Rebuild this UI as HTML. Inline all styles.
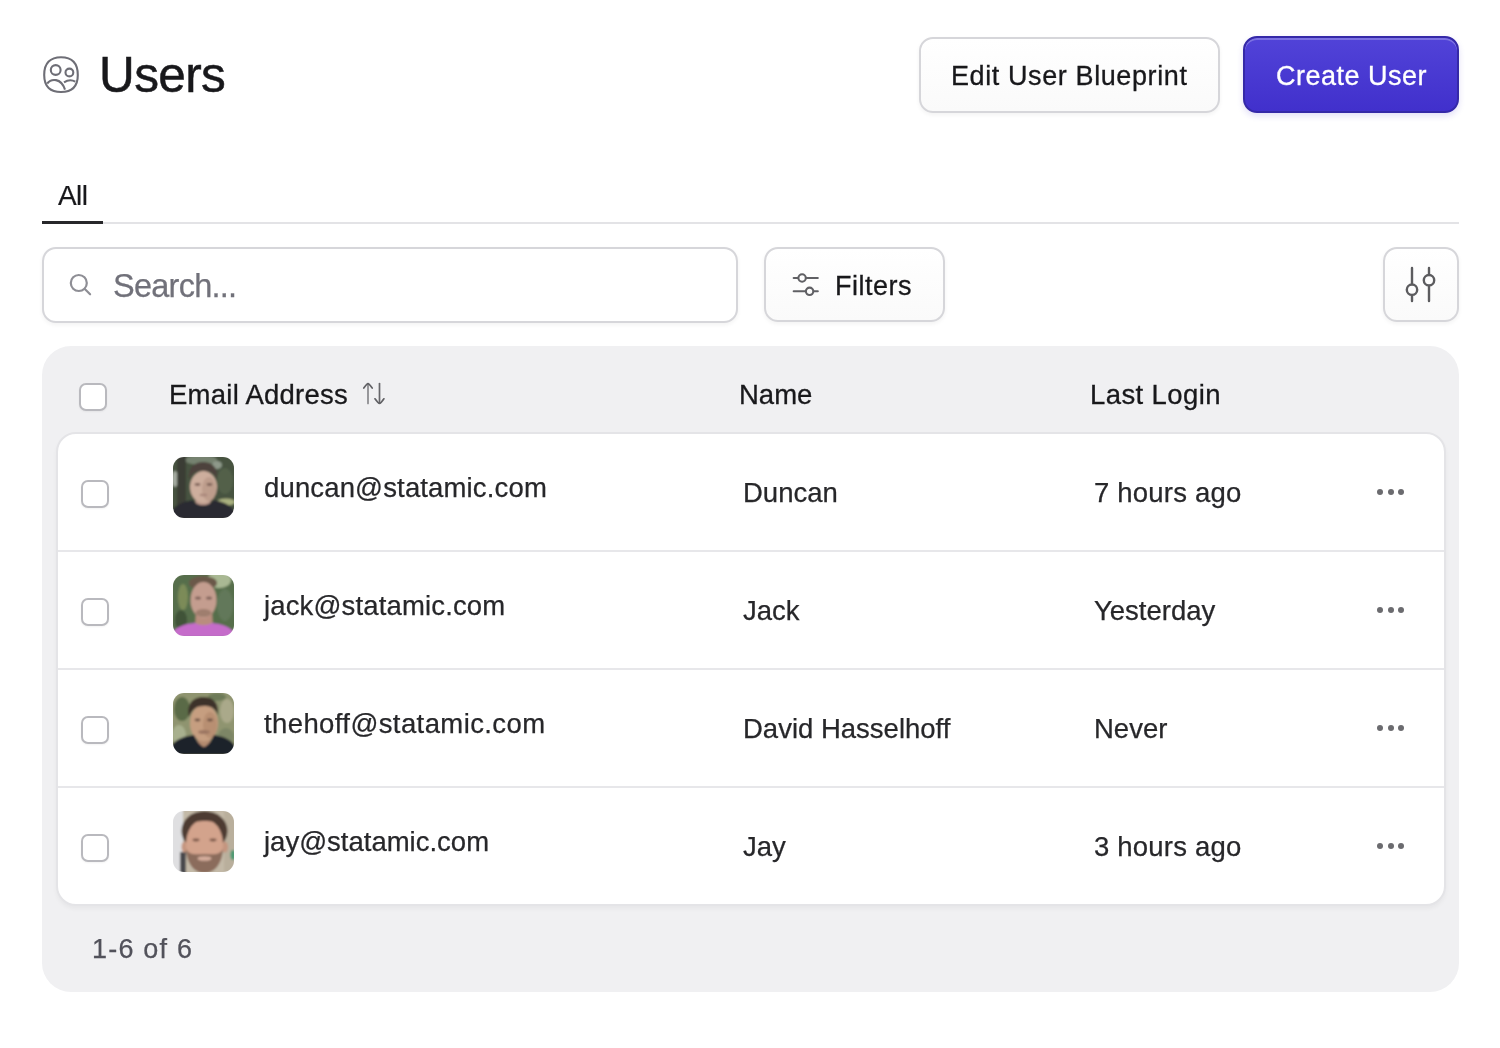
<!DOCTYPE html>
<html>
<head>
<meta charset="utf-8">
<style>
html,body{margin:0;padding:0;background:#fff;}
body{width:1500px;height:1048px;position:relative;overflow:hidden;font-family:"Liberation Sans",sans-serif;color:#18181b;}
.a{position:absolute;}
.t{position:absolute;white-space:nowrap;line-height:1;will-change:transform;-webkit-text-stroke:0.25px currentColor;}
.btn{position:absolute;box-sizing:border-box;border:2px solid #d6d6da;border-radius:14px;background:linear-gradient(#fff,#fafafa);box-shadow:0 2px 4px rgba(0,0,0,0.05);}
.cb{position:absolute;box-sizing:border-box;width:28px;height:28px;border:2px solid #b9b9be;border-radius:7px;background:#fff;box-shadow:0 1px 2px rgba(0,0,0,0.05);}
.sep{position:absolute;left:58px;width:1386px;height:2px;background:#e7e7ea;}
.dots{position:absolute;width:6px;height:6px;border-radius:50%;background:#6b6b6f;}
.av{position:absolute;left:173px;width:61px;height:61px;border-radius:11px;overflow:hidden;}
</style>
</head>
<body>
<!-- header icon -->
<svg class="a" style="left:40px;top:54px" width="42" height="42" viewBox="0 0 42 42" fill="none" stroke="#6e6e76" stroke-width="2.1">
  <path d="M21 3.2 C31.5 3.2 37.8 9 37.8 21 C37.8 33 31.5 38 21 38 C10.5 38 4.2 33 4.2 21 C4.2 9 10.5 3.2 21 3.2 Z"/>
  <circle cx="15.7" cy="16" r="4.9"/>
  <circle cx="29.4" cy="18.5" r="3.9"/>
  <path d="M7.2 29.5 C11 24.5 21 23.5 25 35.6"/>
  <path d="M24 28.3 C28 25.8 32.5 26 35.3 27.7"/>
</svg>
<div class="t" id="title" style="left:99px;top:50px;font-size:49.5px;color:#18181b;letter-spacing:-0.6px;-webkit-text-stroke:0.5px #18181b;">Users</div>

<!-- top buttons -->
<div class="btn" style="left:919px;top:37px;width:301px;height:76px;"></div>
<div class="t" id="editbp" style="left:951px;top:63px;font-size:27px;color:#18181b;letter-spacing:0.6px;-webkit-text-stroke:0.3px #18181b;">Edit User Blueprint</div>
<div class="a" style="left:1243px;top:36px;width:216px;height:77px;box-sizing:border-box;border-radius:14px;border:2px solid #3529a8;background:linear-gradient(#5143d8,#4130cc);box-shadow:inset 0 2px 0 rgba(255,255,255,0.25),0 3px 6px rgba(60,40,200,0.15);"></div>
<div class="t" id="create" style="left:1276px;top:63px;font-size:27px;color:#fff;letter-spacing:0.5px;-webkit-text-stroke:0.3px #fff;">Create User</div>

<!-- tabs -->
<div class="t" id="all" style="left:58px;top:181.5px;font-size:28px;color:#18181b;-webkit-text-stroke:0.2px #18181b;letter-spacing:-0.6px;">All</div>
<div class="a" style="left:42px;top:222px;width:1417px;height:1.5px;background:#e3e3e6;"></div>
<div class="a" style="left:42px;top:221.3px;width:61px;height:2.5px;background:#27272a;"></div>

<!-- search -->
<div class="btn" style="left:42px;top:247px;width:696px;height:76px;background:#fff;"></div>
<svg class="a" style="left:66px;top:270px" width="30" height="30" viewBox="0 0 30 30" fill="none" stroke="#8e8e95" stroke-width="2.2" stroke-linecap="round">
  <circle cx="12.8" cy="13" r="8"/>
  <path d="M18.8 19 L24.1 24.3"/>
</svg>
<div class="t" id="search" style="left:113px;top:269.5px;font-size:32.5px;color:#71717a;letter-spacing:-0.75px;">Search...</div>

<!-- filters -->
<div class="btn" style="left:764px;top:247px;width:181px;height:75px;"></div>
<svg class="a" style="left:788px;top:270px" width="36" height="28" viewBox="0 0 36 28" fill="none" stroke="#606064" stroke-width="2.1" stroke-linecap="round">
  <path d="M5.7 8 H10 M18.3 8 H29.8"/>
  <circle cx="14.1" cy="8" r="3.7"/>
  <path d="M5.7 21.3 H17.5 M25.8 21.3 H29.8"/>
  <circle cx="21.6" cy="21.3" r="3.7"/>
</svg>
<div class="t" id="filters" style="left:834.5px;top:273px;font-size:27px;color:#18181b;letter-spacing:0.5px;-webkit-text-stroke:0.3px #18181b;">Filters</div>

<!-- column settings -->
<div class="btn" style="left:1383px;top:247px;width:76px;height:75px;"></div>
<svg class="a" style="left:1396px;top:260px" width="50" height="50" viewBox="0 0 50 50" fill="none" stroke="#5c5c5f" stroke-width="2.4" stroke-linecap="round">
  <path d="M16 8 V24 M16 35.5 V41"/>
  <circle cx="16" cy="29.7" r="5.2"/>
  <path d="M33 8 V14.5 M33 26 V41"/>
  <circle cx="33" cy="20.2" r="5.2"/>
</svg>

<!-- table container -->
<div class="a" style="left:42px;top:346px;width:1417px;height:646px;border-radius:29px;background:#f0f0f2;"></div>
<div class="cb" style="left:79px;top:383px;"></div>
<div class="t" id="h-email" style="left:169px;top:381px;font-size:27.5px;color:#18181b;letter-spacing:0.25px;-webkit-text-stroke:0.3px #18181b;">Email Address</div>
<svg class="a" style="left:358px;top:378px" width="32" height="32" viewBox="0 0 32 32" fill="none" stroke-width="1.7" stroke-linecap="round" stroke-linejoin="round">
  <path d="M10 25.5 V6" stroke="#88888c"/>
  <path d="M5.8 10 C7.5 7.6 9 5.6 10 5.6 C11 5.6 12.5 7.6 14.2 10" stroke="#606064"/>
  <path d="M21.5 5.5 V25" stroke="#66666a"/>
  <path d="M17 20.8 C18.7 23.2 20.5 25.4 21.5 25.4 C22.5 25.4 24.3 23.2 25.9 20.8" stroke="#606064"/>
</svg>
<div class="t" id="h-name" style="left:739px;top:381px;font-size:27.5px;color:#18181b;-webkit-text-stroke:0.3px #18181b;">Name</div>
<div class="t" id="h-login" style="left:1090px;top:381px;font-size:27.5px;color:#18181b;letter-spacing:0.4px;-webkit-text-stroke:0.3px #18181b;">Last Login</div>

<!-- inner card -->
<div class="a" style="left:56px;top:432px;width:1390px;height:474px;box-sizing:border-box;border:2px solid #e4e4e7;border-radius:20px;background:#fff;box-shadow:0 3px 4px rgba(0,0,0,0.04);"></div>
<div class="sep" style="top:550px;"></div>
<div class="sep" style="top:668px;"></div>
<div class="sep" style="top:786px;"></div>

<!-- rows -->
<div class="cb" style="left:81px;top:480px;"></div>
<div class="cb" style="left:81px;top:598px;"></div>
<div class="cb" style="left:81px;top:716px;"></div>
<div class="cb" style="left:81px;top:834px;"></div>

<div class="av" style="top:457px;"><svg width="61" height="61" viewBox="0 0 61 61"><defs><filter id="b1" x="-20%" y="-20%" width="140%" height="140%"><feGaussianBlur stdDeviation="1.2"/></filter></defs>
<g filter="url(#b1)">
<rect x="-5" y="-5" width="71" height="71" fill="#46523f"/>
<ellipse cx="28" cy="3" rx="16" ry="5" fill="#76826f"/>
<ellipse cx="44" cy="8" rx="5" ry="4" fill="#8e998a"/>
<ellipse cx="2" cy="22" rx="3" ry="8" fill="#a4aba0"/>
<rect x="4" y="-2" width="9" height="50" fill="#3b3c35"/>
<ellipse cx="53" cy="45" rx="9" ry="3.5" fill="#a9b07f"/>
<ellipse cx="52" cy="24" rx="8" ry="13" fill="#52604a"/>
<path d="M22 38 L38 38 L37 52 L30 54 L23 52 Z" fill="#b9978a"/>
<ellipse cx="30.5" cy="30" rx="13.5" ry="16" fill="#cdae9d"/>
<ellipse cx="36" cy="32" rx="7" ry="12" fill="#bd9d8c"/>
<path d="M16 22 C15 10 22 5 30 5 C39 5 45 10 44 22 C41 15 36 14 30 14 C23 14 19 16 16 22 Z" fill="#4d423c"/>
<path d="M-2 62 L-2 55 C2 47 12 44 20 43 C24 50 36 50 40 43 C48 44 58 47 62 55 L62 62 Z" fill="#2c2c31"/>
<ellipse cx="24.5" cy="27.5" rx="3" ry="1.4" fill="#7d6157"/>
<ellipse cx="36.5" cy="27.5" rx="3" ry="1.4" fill="#7d6157"/>
<ellipse cx="30.5" cy="38" rx="4" ry="1.2" fill="#a8857a"/>
</g></svg></div>
<div class="av" style="top:575px;"><svg width="61" height="61" viewBox="0 0 61 61"><defs><filter id="b2" x="-20%" y="-20%" width="140%" height="140%"><feGaussianBlur stdDeviation="1.3"/></filter></defs>
<g filter="url(#b2)">
<rect x="-5" y="-5" width="71" height="71" fill="#566e4c"/>
<ellipse cx="46" cy="5" rx="12" ry="8" fill="#a9b893"/>
<ellipse cx="10" cy="22" rx="5" ry="13" fill="#7b8b58"/>
<ellipse cx="52" cy="30" rx="8" ry="16" fill="#62785a"/>
<ellipse cx="8" cy="45" rx="6" ry="10" fill="#3f5238"/>
<ellipse cx="30" cy="8" rx="14" ry="7" fill="#6a5849"/>
<path d="M23 36 L39 36 L40 52 L22 52 Z" fill="#b98d7e"/>
<ellipse cx="30.5" cy="25" rx="13" ry="18" fill="#c49d8f"/>
<ellipse cx="25" cy="23" rx="3" ry="1.5" fill="#7e6058"/>
<ellipse cx="36" cy="23" rx="3" ry="1.5" fill="#7e6058"/>
<ellipse cx="30.5" cy="38" rx="8" ry="4" fill="#9f7e6e"/>
<path d="M-2 62 L-2 59 C4 51 12 49 22 48 C27 51 34 51 39 48 C48 49 56 51 62 58 L62 62 Z" fill="#c56cca"/>
</g></svg></div>
<div class="av" style="top:693px;"><svg width="61" height="61" viewBox="0 0 61 61"><defs><filter id="b3" x="-20%" y="-20%" width="140%" height="140%"><feGaussianBlur stdDeviation="1.2"/></filter></defs>
<g filter="url(#b3)">
<rect x="-5" y="-5" width="71" height="71" fill="#8f9470"/>
<ellipse cx="9" cy="16" rx="8" ry="12" fill="#5a6a46"/>
<ellipse cx="6" cy="42" rx="7" ry="10" fill="#a8b08e"/>
<ellipse cx="54" cy="18" rx="7" ry="12" fill="#aaa98a"/>
<ellipse cx="53" cy="44" rx="8" ry="9" fill="#7d8666"/>
<ellipse cx="44" cy="4" rx="9" ry="4" fill="#6d7a58"/>
<path d="M24 40 L38 40 L37 54 L25 54 Z" fill="#b38a70"/>
<ellipse cx="31" cy="30" rx="14" ry="18.5" fill="#c69e80"/>
<ellipse cx="37" cy="32" rx="7" ry="13" fill="#b88f72"/>
<path d="M16 24 C13 10 21 4 30 4 C40 4 46 9 45 22 C42 14 36 13 31 13 C24 13 19 16 16 24 Z" fill="#3d3029"/>
<ellipse cx="24.5" cy="27" rx="3" ry="1.4" fill="#6e5244"/>
<ellipse cx="37" cy="27" rx="3" ry="1.4" fill="#6e5244"/>
<ellipse cx="31" cy="39" rx="6" ry="2" fill="#9c7662"/>
<path d="M-2 62 L-2 53 C4 45 13 43 21 42 C24 48 27 53 31 54 C35 53 38 48 41 42 C49 43 58 46 62 53 L62 62 Z" fill="#1d222c"/>
</g></svg></div>
<div class="av" style="top:811px;"><svg width="61" height="61" viewBox="0 0 61 61"><defs><filter id="b4" x="-20%" y="-20%" width="140%" height="140%"><feGaussianBlur stdDeviation="1.2"/></filter></defs>
<g filter="url(#b4)">
<rect x="-5" y="-5" width="71" height="71" fill="#c3b9a7"/>
<rect x="-5" y="-5" width="15" height="71" fill="#dfdfe1"/>
<rect x="7" y="41" width="6" height="25" fill="#4a4a4d"/>
<rect x="51" y="-5" width="15" height="71" fill="#b9af9c"/>
<ellipse cx="60" cy="44" rx="2.6" ry="5" fill="#4c9a72"/>
<ellipse cx="31.5" cy="20" rx="23" ry="20" fill="#4d3b30"/>
<ellipse cx="11.5" cy="36" rx="3" ry="5.5" fill="#c5957f"/>
<ellipse cx="52" cy="36" rx="3" ry="5.5" fill="#c5957f"/>
<ellipse cx="31.5" cy="33" rx="18.5" ry="25" fill="#d3a38c"/>
<path d="M13 16 C16 7 24 5 32 5 C40 5 47 7 50 16 C44 11 38 10 32 10 C25 10 19 11 13 16 Z" fill="#4d3b30"/>
<path d="M13 38 C14 55 23 62 31.5 62 C40 62 49 55 50 38 C46 45 40 43 31.5 43 C23 43 17 45 13 38 Z" fill="#8b6c5b"/>
<ellipse cx="31.5" cy="47.5" rx="7" ry="2.3" fill="#d5ad9c"/>
<ellipse cx="23" cy="29" rx="3.5" ry="1.4" fill="#7a5848"/>
<ellipse cx="40" cy="29" rx="3.5" ry="1.4" fill="#7a5848"/>
</g></svg></div>

<div class="t" id="r1e" style="left:264px;top:474px;font-size:27.5px;color:#27272a;letter-spacing:0.15px;">duncan@statamic.com</div>
<div class="t" id="r2e" style="left:264px;top:592px;font-size:27.5px;color:#27272a;letter-spacing:0.15px;">jack@statamic.com</div>
<div class="t" id="r3e" style="left:264px;top:710px;font-size:27.5px;color:#27272a;letter-spacing:0.4px;">thehoff@statamic.com</div>
<div class="t" id="r4e" style="left:264px;top:828px;font-size:27.5px;color:#27272a;">jay@statamic.com</div>

<div class="t" id="r1n" style="left:743px;top:479px;font-size:27.5px;color:#27272a;">Duncan</div>
<div class="t" id="r2n" style="left:743px;top:597px;font-size:27.5px;color:#27272a;">Jack</div>
<div class="t" id="r3n" style="left:743px;top:715px;font-size:27.5px;color:#27272a;">David Hasselhoff</div>
<div class="t" id="r4n" style="left:743px;top:833px;font-size:27.5px;color:#27272a;">Jay</div>

<div class="t" id="r1l" style="left:1094px;top:479px;font-size:27.5px;color:#27272a;letter-spacing:0.2px;">7 hours ago</div>
<div class="t" id="r2l" style="left:1094px;top:597px;font-size:27.5px;color:#27272a;">Yesterday</div>
<div class="t" id="r3l" style="left:1094px;top:715px;font-size:27.5px;color:#27272a;">Never</div>
<div class="t" id="r4l" style="left:1094px;top:833px;font-size:27.5px;color:#27272a;letter-spacing:0.2px;">3 hours ago</div>

<div class="dots" style="left:1377px;top:489px;"></div><div class="dots" style="left:1388px;top:489px;"></div><div class="dots" style="left:1398px;top:489px;"></div>
<div class="dots" style="left:1377px;top:607px;"></div><div class="dots" style="left:1388px;top:607px;"></div><div class="dots" style="left:1398px;top:607px;"></div>
<div class="dots" style="left:1377px;top:725px;"></div><div class="dots" style="left:1388px;top:725px;"></div><div class="dots" style="left:1398px;top:725px;"></div>
<div class="dots" style="left:1377px;top:843px;"></div><div class="dots" style="left:1388px;top:843px;"></div><div class="dots" style="left:1398px;top:843px;"></div>

<div class="t" id="pag" style="left:92px;top:936px;font-size:27px;color:#52525b;letter-spacing:1.2px;">1-6 of 6</div>
</body>
</html>
